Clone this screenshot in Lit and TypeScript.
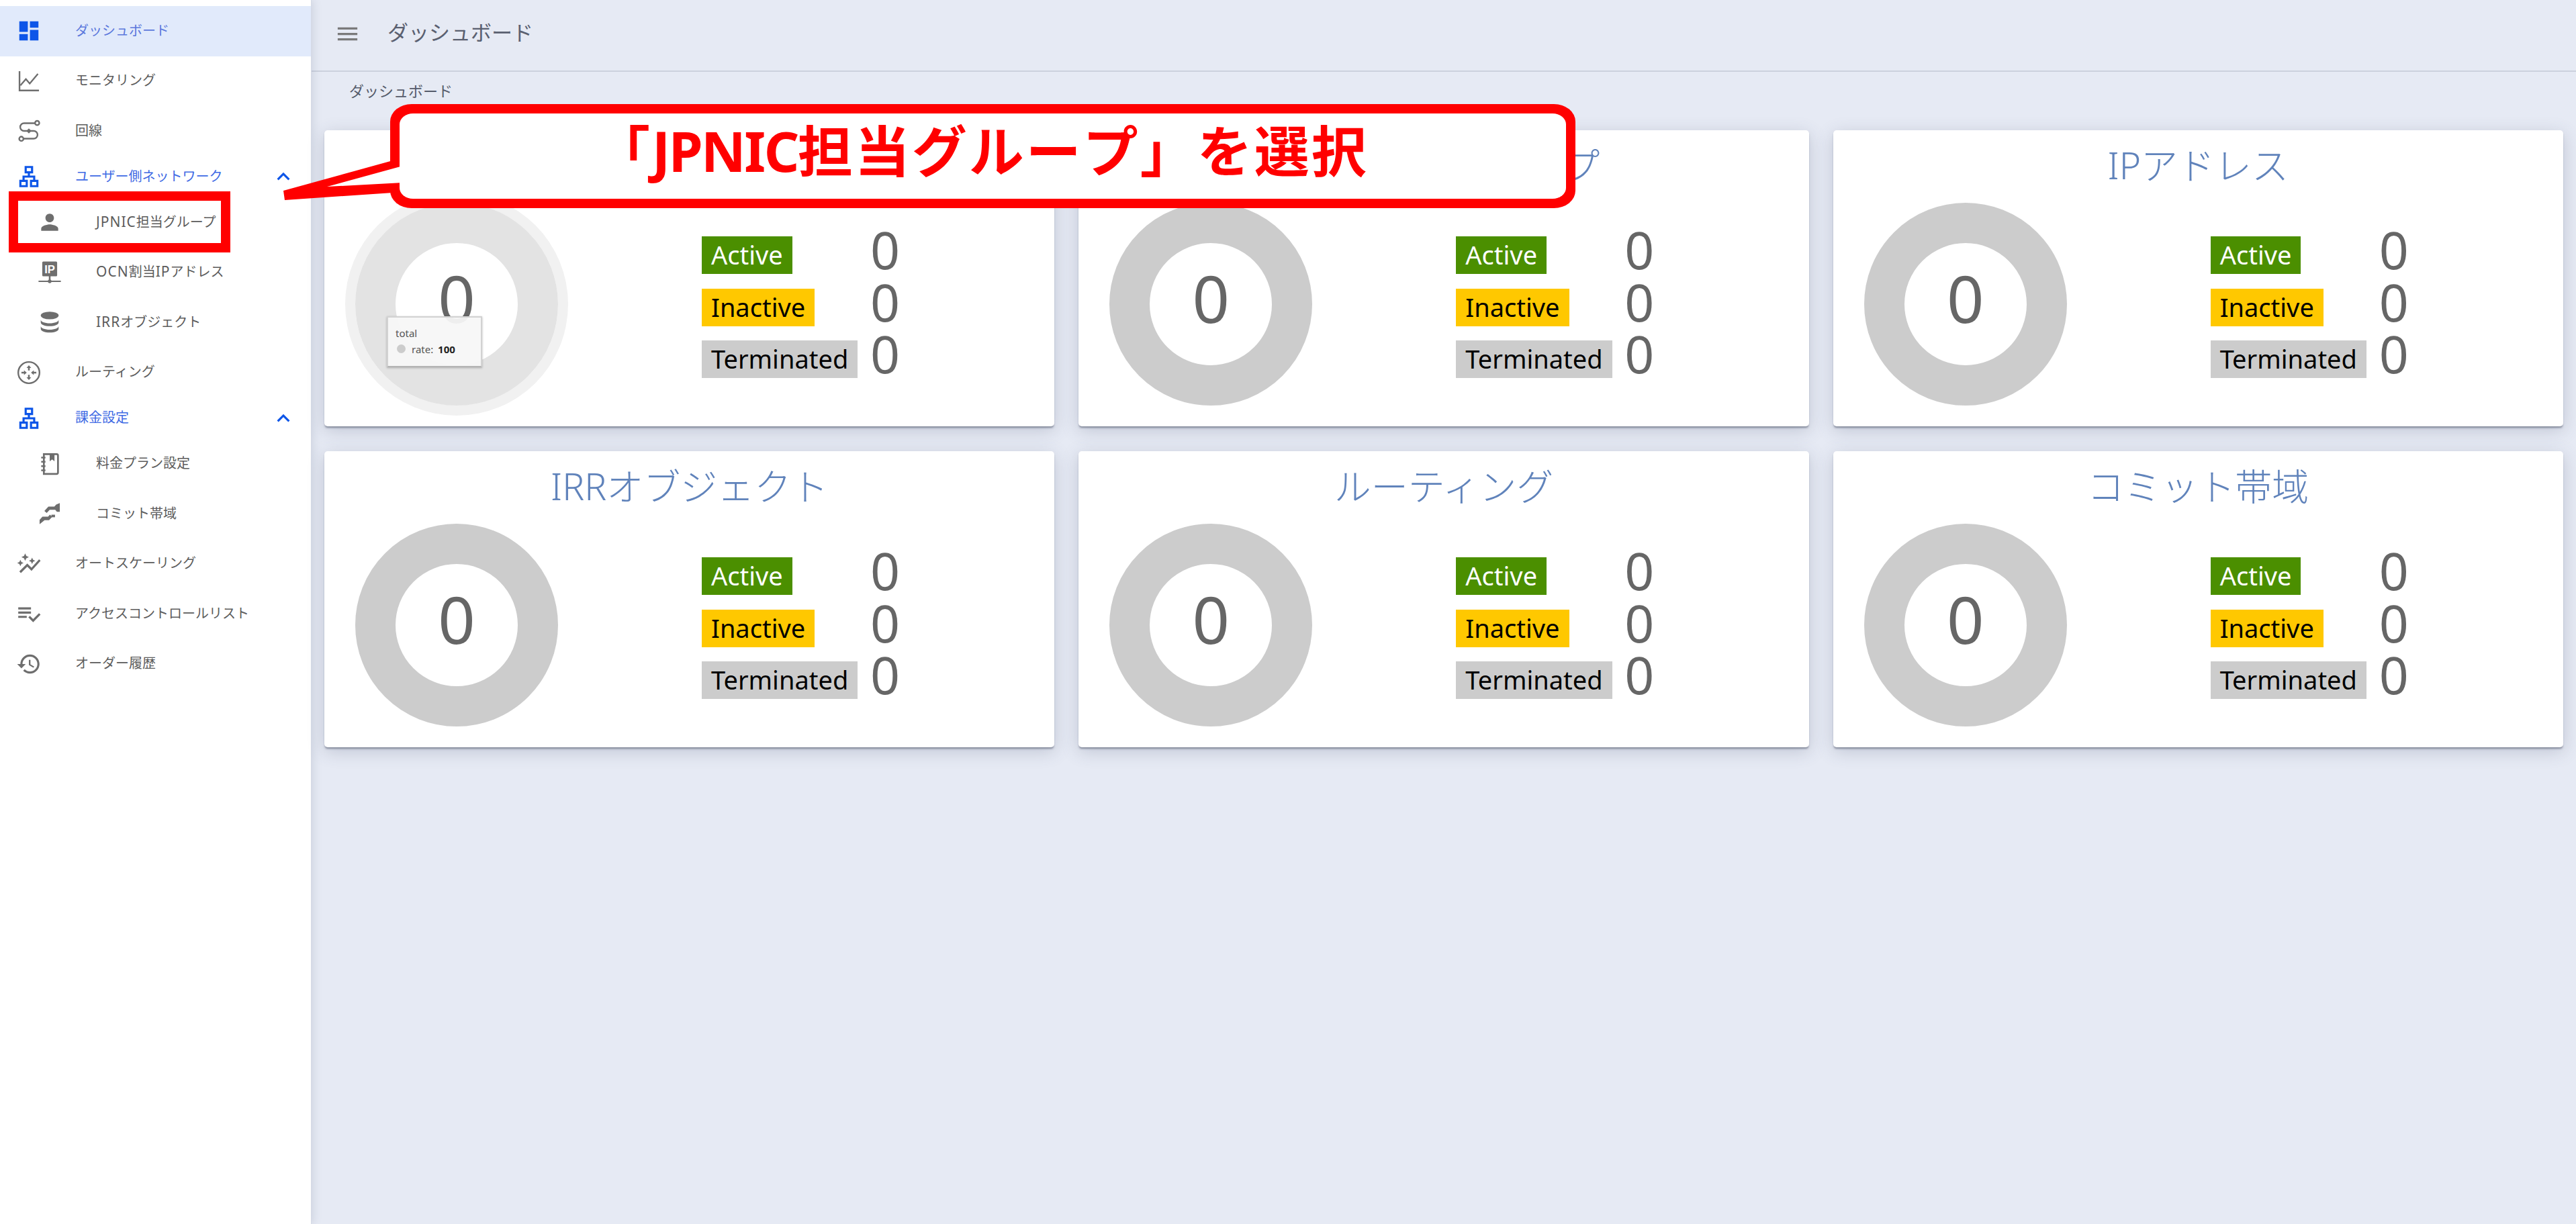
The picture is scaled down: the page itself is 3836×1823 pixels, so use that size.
import { LitElement, html, svg, css, nothing } from 'lit'
import { customElement, property } from 'lit/decorators.js'

const FONT = css`'Noto Sans', 'Noto Sans CJK JP', sans-serif`

const ICONS: Record<string, unknown> = {
    dashboard: svg`<path d="M3 13h8V3H3v10zm0 8h8v-6H3v6zm10 0h8V11h-8v10zm0-18v6h8V3h-8z" />`,
    chart: svg`<path d="M3.2 2.5v18.2h18.3" fill="none" stroke="currentColor" stroke-width="1.5" /><path d="M4 16l5.2-6 3.6 4.2L20.5 5" fill="none" stroke="currentColor" stroke-width="1.5" />`,
    route: svg`<g fill="none" stroke="currentColor" stroke-width="1.5"><path d="M18 4.7H7.5a3.6 3.6 0 0 0 0 7.3h9a3.6 3.6 0 0 1 0 7.3H7" /><circle cx="19.8" cy="4.5" r="2" /><circle cx="4.9" cy="19.4" r="2" /></g><path d="M12 9.6l2.4 2.4-2.4 2.4L9.6 12z" />`,
    lan: svg`<path d="M13 22h8v-7h-3v-4h-5V9h3V2H8v7h3v2H6v4H3v7h8v-7H8v-2h8v2h-3v7zM10 7V4h4v3h-4zM5 20v-3h4v3H5zm10 0v-3h4v3h-4z" />`,
    person: svg`<path d="M12 12c2.21 0 4-1.79 4-4s-1.79-4-4-4-4 1.79-4 4 1.79 4 4 4zm0 2c-2.67 0-8 1.34-8 4v2h16v-2c0-2.66-5.33-4-8-4z" />`,
    ip: svg`<rect x="5" y="1.5" width="14" height="14" rx="1" /><text x="12" y="12.4" text-anchor="middle" font-size="10.5" font-weight="700" fill="#fff" font-family="Liberation Sans, sans-serif">IP</text><path d="M11.2 15h1.6v4h-1.6zM1.5 19.5h21v1.4h-21z" /><circle cx="12" cy="20.2" r="1.7" />`,
    database: svg`<ellipse cx="12" cy="5.6" rx="8.4" ry="3.6" /><path d="M3.6 9.4c0 2 3.8 3.5 8.4 3.5s8.4-1.5 8.4-3.5v2.7c0 2-3.8 3.6-8.4 3.6s-8.4-1.6-8.4-3.6z" /><path d="M3.6 15.4c0 2 3.8 3.5 8.4 3.5s8.4-1.5 8.4-3.5v2.7c0 2-3.8 3.6-8.4 3.6s-8.4-1.6-8.4-3.6z" />`,
    router: svg`<circle cx="12" cy="12" r="10" fill="none" stroke="currentColor" stroke-width="1.5" /><path d="M12 5l2.2 2.6h-1.4V10h-1.6V7.6H9.8zM12 19l2.2-2.6h-1.4V14h-1.6v2.4H9.8zM10 12l-2.6-2.2v1.4H5v1.6h2.4v1.4zM14 12l2.6-2.2v1.4H19v1.6h-2.4v1.4z" />`,
    notebook: svg`<path d="M6.5 2.8h12a1.3 1.3 0 0 1 1.3 1.3v16a1.3 1.3 0 0 1-1.3 1.3h-12z" fill="none" stroke="currentColor" stroke-width="1.7" /><path d="M12 3h4.5v6.4l-2.2-1.6L12 9.4z" /><path d="M4 6h4M4 10h4M4 14h4M4 18h4" fill="none" stroke="currentColor" stroke-width="1.6" />`,
    commit: svg`<path d="M21.5 2v8.2h-2.7l-1.6-1.9H12l-2.8 3.1-2.2-2 3.8-4h5.6l1.7-1.9z" /><path d="M2.5 22v-4.2l2.7-2.9h5.3l1.7-1.9 2.2 2-3 3.2H7.2z" /><path d="M17 13h-3.4v2.4H17z" />`,
    autograph: svg`<path d="M14.06 9.94 12 9l2.06-.94L15 6l.94 2.06L18 9l-2.06.94L15 12zM4 14l.94-2.06L7 11l-2.06-.94L4 8l-.94 2.06L1 11l2.06.94L4 14zm4.5-5 1.09-2.41L12 5.5 9.59 4.41 8.5 2 7.41 4.41 5 5.5l2.41 1.09L8.5 9zm-4 11.5 6-6.01 4 4L23 8.93l-1.41-1.41-7.09 7.97-4-4L3 19z" />`,
    checklist: svg`<path d="M14 10H2v2h12v-2zm0-4H2v2h12V6zM2 16h8v-2H2v2zm19.5-4.5L23 13l-6.99 7-4.51-4.5L13 14l3.01 3 5.49-5.5z" />`,
    history: svg`<path d="M13 3c-4.97 0-9 4.03-9 9H1l3.89 3.89.07.14L9 12H6c0-3.87 3.13-7 7-7s7 3.13 7 7-3.13 7-7 7c-1.93 0-3.68-.79-4.94-2.06l-1.42 1.42C8.27 19.99 10.51 21 13 21c4.97 0 9-4.03 9-9s-4.03-9-9-9zm-1 5v5l4.28 2.54.72-1.21-3.5-2.08V8H12z" />`,
    chevron: svg`<path d="M12 8l-6 6 1.41 1.41L12 10.83l4.59 4.58L18 14z" />`,
    menu: svg`<path d="M3 18h18v-2H3v2zm0-5h18v-2H3v2zm0-7v2h18V6H3z" />`,
}

const icon = (name: string) =>
    html`<svg class="icon" viewBox="0 0 24 24" fill="currentColor">${ICONS[name]}</svg>`

interface NavItem {
    label: string
    icon: string
    kind?: 'active' | 'group' | 'sub'
}

const NAV: NavItem[] = [
    { label: 'ダッシュボード', icon: 'dashboard', kind: 'active' },
    { label: 'モニタリング', icon: 'chart' },
    { label: '回線', icon: 'route' },
    { label: 'ユーザー側ネットワーク', icon: 'lan', kind: 'group' },
    { label: 'JPNIC担当グループ', icon: 'person', kind: 'sub' },
    { label: 'OCN割当IPアドレス', icon: 'ip', kind: 'sub' },
    { label: 'IRRオブジェクト', icon: 'database', kind: 'sub' },
    { label: 'ルーティング', icon: 'router' },
    { label: '課金設定', icon: 'lan', kind: 'group' },
    { label: '料金プラン設定', icon: 'notebook', kind: 'sub' },
    { label: 'コミット帯域', icon: 'commit', kind: 'sub' },
    { label: 'オートスケーリング', icon: 'autograph' },
    { label: 'アクセスコントロールリスト', icon: 'checklist' },
    { label: 'オーダー履歴', icon: 'history' },
]

// latin runs sit a little wider than the kana next to them
const labelText = (label: string) =>
    label
        .split(/([A-Z]+)/)
        .map((part) => (/^[A-Z]+$/.test(part) ? html`<i>${part}</i>` : part))

@customElement('side-nav')
export class SideNav extends LitElement {
    static styles = css`
        :host {
            display: block;
            width: 463px;
            flex: none;
            box-sizing: border-box;
            padding-top: 9px;
            background: #ffffff;
            box-shadow: 1px 0 0 #d5dae6, 3px 0 12px rgba(90, 100, 130, 0.18);
            font-family: ${FONT};
            position: relative;
        }

        .row {
            display: flex;
            align-items: center;
            height: 74.5px;
            padding-left: 24px;
            font-size: 20px;
            color: #5c5c5c;
        }

        .row .icon {
            width: 38px;
            height: 38px;
            flex: none;
            color: #6e6e6e;
        }

        .row span {
            margin-left: 50px;
            position: relative;
            top: -2px;
            white-space: nowrap;
        }

        .row i {
            font-style: normal;
            font-size: 21px;
            letter-spacing: 1px;
        }

        .active {
            background: #e1eafb;
            color: #5b78dc;
        }

        .active .icon,
        .group .icon {
            color: #0d55e8;
        }

        .group {
            height: 61.5px;
            color: #3f6ae4;
        }

        .sub {
            padding-left: 55px;
        }

        .chevron {
            margin-left: auto;
            margin-right: 22px;
            display: flex;
        }

        .row .chevron .icon {
            width: 38px;
            height: 38px;
            color: #0d55e8;
        }
    `

    render() {
        return NAV.map(
            (item) => html`
                <div class="row ${item.kind ?? ''}">
                    ${icon(item.icon)}
                    <span>${labelText(item.label)}</span>
                    ${item.kind === 'group'
                        ? html`<div class="chevron">${icon('chevron')}</div>`
                        : nothing}
                </div>
            `
        )
    }
}

@customElement('status-card')
export class StatusCard extends LitElement {
    @property() heading = ''
    @property({ type: Boolean }) hovered = false

    static styles = css`
        :host {
            display: block;
            background: #ffffff;
            border-radius: 5px;
            box-shadow: 0 3px 3px -1px rgba(70, 78, 100, 0.6),
                0 6px 26px rgba(70, 80, 110, 0.24);
            position: relative;
            font-family: ${FONT};
            height: 441px;
        }

        .title {
            height: 108px;
            box-sizing: border-box;
            padding-top: 17px;
            text-align: center;
            font-size: 55px;
            line-height: 70px;
            font-weight: 300;
            color: #6083bb;
        }

        .body {
            display: flex;
            padding-left: 46px;
        }

        .donut {
            width: 302px;
            height: 302px;
            box-sizing: border-box;
            border: 60px solid #cccccc;
            border-radius: 50%;
            flex: none;
            display: flex;
            align-items: center;
            justify-content: center;
            font-size: 97px;
            line-height: 1;
            color: #666666;
            padding-bottom: 20px;
        }

        .donut.hover {
            border-color: #e3e3e3;
            box-shadow: 0 0 0 15px #f1f1f1;
        }

        .legend {
            margin: 44px 0 0 214px;
            display: grid;
            grid-template-columns: 251px auto;
            grid-auto-rows: 77.5px;
        }

        .badge {
            justify-self: start;
            height: 56px;
            padding: 0 14px;
            font-size: 38px;
            line-height: 54px;
            margin-top: 6px;
        }

        .on {
            background: #4b8f00;
            color: #ffffff;
        }

        .off {
            background: #ffc800;
            color: #000000;
        }

        .end {
            background: #cccccc;
            color: #000000;
        }

        .num {
            font-size: 77px;
            line-height: 52px;
            color: #666666;
        }

        .tooltip {
            position: absolute;
            left: 93px;
            top: 277px;
            width: 142px;
            height: 76px;
            box-sizing: border-box;
            padding: 11px 11px;
            background: rgba(247, 247, 247, 0.94);
            border: 2px solid #d2d2d2;
            border-bottom-color: #b4b4b4;
            box-shadow: 0 1px 3px rgba(0, 0, 0, 0.25);
            font-size: 15px;
            line-height: 24px;
            color: #555555;
        }

        .tooltip .dot {
            display: inline-block;
            width: 13px;
            height: 13px;
            border-radius: 50%;
            background: #cccccc;
            margin: 0 9px 0 2px;
        }

        .tooltip b {
            color: #222222;
            margin-left: 3px;
        }
    `

    render() {
        return html`
            <div class="title">${this.heading}</div>
            <div class="body">
                <div class="donut ${this.hovered ? 'hover' : ''}">0</div>
                <div class="legend">
                    <div class="badge on">Active</div>
                    <div class="num">0</div>
                    <div class="badge off">Inactive</div>
                    <div class="num">0</div>
                    <div class="badge end">Terminated</div>
                    <div class="num">0</div>
                </div>
            </div>
            ${this.hovered
                ? html`<div class="tooltip">
                      <div>total</div>
                      <div><i class="dot"></i>rate: <b>100</b></div>
                  </div>`
                : nothing}
        `
    }
}

@customElement('app-root')
export class AppRoot extends LitElement {
    static styles = css`
        :host {
            display: flex;
            min-height: 100vh;
            position: relative;
            background: #e6eaf4;
            font-family: ${FONT};
        }

        main {
            flex: 1;
            min-width: 0;
        }

        header {
            height: 105px;
            border-bottom: 2px solid #ccd1de;
            display: flex;
            align-items: center;
            padding-left: 35px;
            font-size: 31px;
            color: #5a6070;
        }

        header .icon {
            width: 39px;
            height: 39px;
            color: #7a7a7a;
            margin-right: 40px;
            position: relative;
            top: -2px;
        }

        header span {
            position: relative;
            top: -6px;
        }

        .crumb {
            height: 87px;
            box-sizing: border-box;
            padding: 10px 0 0 57px;
            font-size: 22px;
            line-height: 36px;
            color: #555b6a;
        }

        .grid {
            display: grid;
            grid-template-columns: repeat(3, 1fr);
            gap: 37px 36px;
            padding: 0 19px 0 20px;
        }

        /* annotation layered over the screenshot */
        .select-box {
            position: absolute;
            left: 13px;
            top: 285px;
            width: 330px;
            height: 91px;
            box-sizing: border-box;
            border: 14px solid #ff0000;
        }

        .callout {
            position: absolute;
            left: 420px;
            top: 155px;
            width: 1926px;
            height: 155px;
            display: flex;
            align-items: center;
            box-sizing: border-box;
            padding: 0 0 24px 466px;
            color: #ff0000;
            font-size: 82px;
            font-weight: 700;
            letter-spacing: 3px;
            white-space: nowrap;
            text-spacing-trim: space-all;
            font-kerning: none;
        }

        .callout svg {
            position: absolute;
            inset: 0;
        }

        .callout span {
            position: relative;
        }

        .callout i {
            font-style: normal;
            letter-spacing: -2.5px;
        }
    `

    render() {
        return html`
            <side-nav></side-nav>
            <main>
                <header>${icon('menu')}<span>ダッシュボード</span></header>
                <div class="crumb">ダッシュボード</div>
                <div class="grid">
                    <status-card heading="回線" hovered></status-card>
                    <status-card heading="JPNIC担当グループ"></status-card>
                    <status-card heading="IPアドレス"></status-card>
                    <status-card heading="IRRオブジェクト"></status-card>
                    <status-card heading="ルーティング"></status-card>
                    <status-card heading="コミット帯域"></status-card>
                </div>
            </main>
            <div class="select-box"></div>
            <div class="callout">
                <svg width="1926" height="155" viewBox="0 0 1926 155">
                    <rect x="161" y="0" width="1765" height="155" rx="32" ry="26" fill="#ff0000" />
                    <polygon points="165,84 2,129 4,143 165,132" fill="#ff0000" />
                    <rect x="175" y="14" width="1737" height="127" rx="20" ry="16" fill="#ffffff" />
                    <polygon points="180,92 67,123 180,117" fill="#ffffff" />
                </svg>
                <span>「<i>JPNIC</i>担当グループ」を選択</span>
            </div>
        `
    }
}
